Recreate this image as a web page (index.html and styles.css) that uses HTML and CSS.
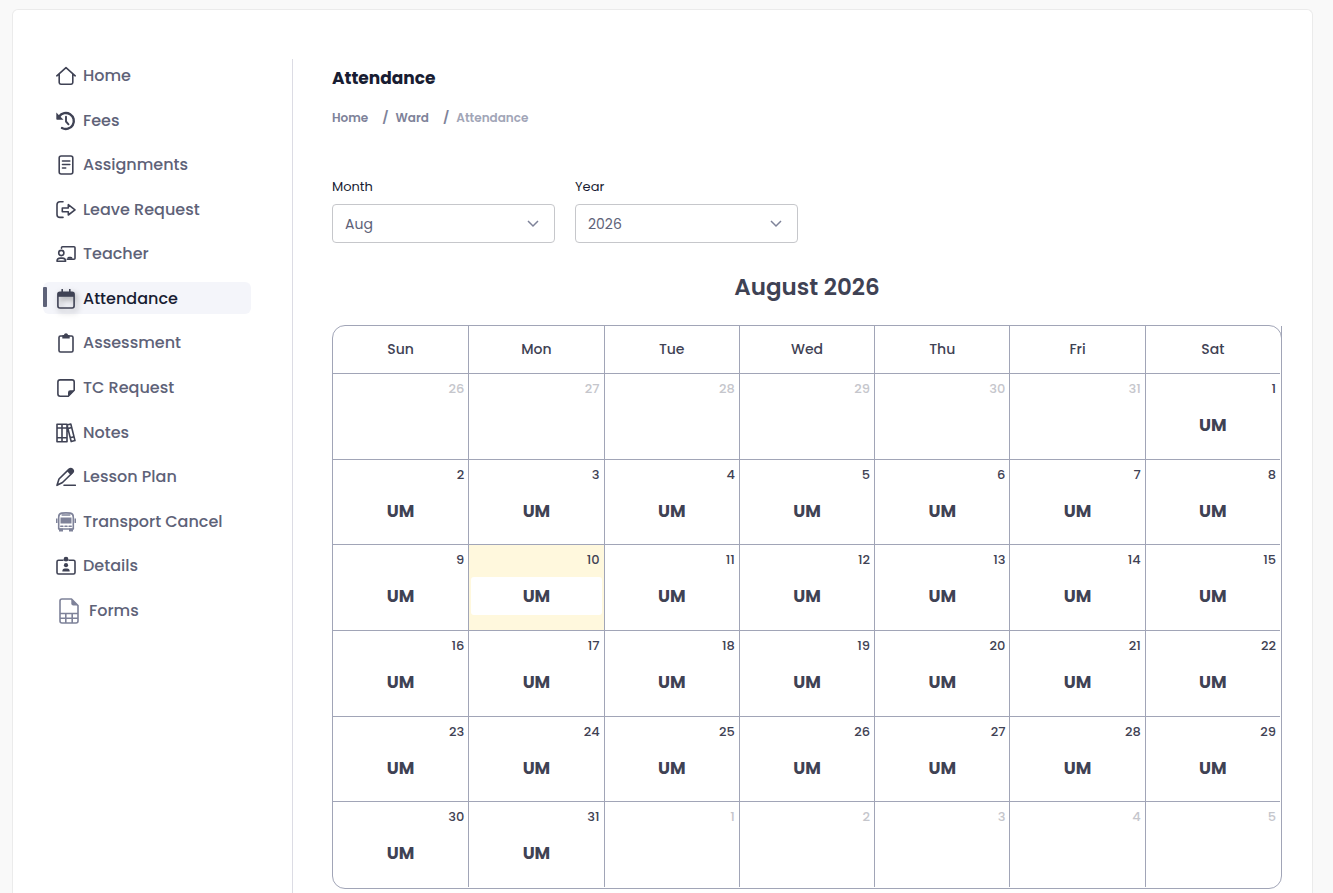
FILE: index.html
```html
<!DOCTYPE html>
<html lang="en">
<head>
<meta charset="utf-8">
<meta name="viewport" content="width=device-width, initial-scale=1">
<title>Attendance</title>
<link rel="stylesheet" href="styles.css">
</head>
<body>
<div class="card">
  <nav class="side" aria-label="Ward">
    <a class="item" href="#"><svg class="icon" viewBox="0 0 20 20"><path d="M.8 9.800 10 1.700l9.200 8.100M3.200 8v8.600q0 1.600 1.600 1.600h10.400q1.600 0 1.600-1.600V8"/></svg>Home</a>
    <a class="item" href="#"><svg class="icon" viewBox="0 0 20 20"><path stroke-width="2.400" d="M3.200 5.500A8 8 0 1 1 6 17"/><path class="solid" d="M.3 1.500v6.400q0 .8.8.8h6.400z"/><path d="M10 5.700v4.800l2.500 2.800" stroke-width="1.900"/></svg>Fees</a>
    <a class="item" href="#"><svg class="icon" viewBox="0 0 20 20"><rect x="3.200" y="1" width="13.600" height="18" rx="2"/><path d="M6.500 6h7.300M6.500 9.500h7.300M6.500 13h3.200"/></svg>Assignments</a>
    <a class="item" href="#"><svg class="icon" viewBox="0 0 20 20"><path d="M7 1.800H4Q1 1.800 1 4.800v9.600q0 3 3 3h3"/><path d="M6.300 8v3.800h6V15L19 9.900 12.300 4.700V8z"/></svg>Leave Request</a>
    <a class="item" href="#"><svg class="icon" viewBox="0 0 20 20"><circle cx="5.300" cy="9" r="2.600"/><path d="M1 17.300q0-3.200 3.500-3.200h1.800q3.300 0 3.300 3.200zM5.500 4.200V3.800q0-1 1-1h11.500q1 0 1 1v10.500q0 1-1 1h-6.700"/><path class="solid" d="M11.200 14.800q0-2 1.600-2h2.100q1.600 0 1.600 2z"/></svg>Teacher</a>
    <a class="item active" href="#" aria-current="page"><svg class="icon" viewBox="0 0 20 20"><rect x="1.900" y="3.200" width="16.200" height="15.800" rx="2"/><path class="solid" d="M2 3.500h16v4.300H2z"/><path stroke-width="1.600" d="M6.200.5v3M13.800.5v3"/></svg>Attendance</a>
    <a class="item" href="#"><svg class="icon" viewBox="0 0 20 20"><path d="M7 3H4.500Q3 3 3 4.500v13Q3 19 4.500 19h11q1.500 0 1.500-1.500v-13Q17 3 15.500 3H13"/><path class="solid" d="M6.300 5.500V2.700q0-.8.8-.8h.8Q8.300.2 10 .2t2.100 1.700h.8q.8 0 .8.800v2.800z"/></svg>Assessment</a>
    <a class="item" href="#"><svg class="icon" viewBox="0 0 20 20"><path d="M12.300 18.200H4.100q-2.200 0-2.200-2.200V4.100q0-2.200 2.200-2.200H16q2.200 0 2.200 2.200v8.200z"/><path class="solid" d="M12 18.500v-4q0-2.200 2.200-2.200h4z"/></svg>TC Request</a>
    <a class="item" href="#"><svg class="icon" viewBox="0 0 20 20"><path d="M1 1.200h5v17.600H1zM6 1.200h5v17.600H6zM1 5h10M1 14.800h10M11 2l3.800-1L19 17.600l-3.800 1zM12 5.500l3.800-1M14.200 14.700l3.800-1"/></svg>Notes</a>
    <a class="item" href="#"><svg class="icon" viewBox="0 0 20 20"><path d="M1 18.300 3 12 12.800 2.400q2-1.800 3.700-.1 1.700 1.800 0 3.500L6.500 15.500zM8 18.300h11.300"/><path class="solid" d="m11 4.200 2-2q2-1.600 3.700.1 1.700 1.800 0 3.700l-2 2z"/></svg>Lesson Plan</a>
    <a class="item" href="#"><svg class="icon soft" viewBox="0 0 20 20"><path d="M2.700 17V5q0-3.500 3-3.900 4.300-.5 8.600 0 3 .4 3 3.900v12zM6.200 3h7.600"/><path class="solid" d="M4.500 5.500h11v6h-11zM3 16.500h4v3H3zM13 16.500h4v3h-4zM0 6.500h1.500V11H0zM18.500 6.500H20V11h-1.500z"/><path d="M4.800 14.200h2.100M9 14.200h2M13.100 14.200h2.100"/></svg>Transport Cancel</a>
    <a class="item" href="#"><svg class="icon" viewBox="0 0 20 20"><path d="M7 4.300H2.500Q1 4.300 1 5.800v10.700Q1 18 2.500 18h15q1.500 0 1.500-1.500V5.800q0-1.500-1.500-1.500H13"/><circle class="solid" cx="10" cy="3.200" r="2.400"/><circle class="solid" cx="10" cy="9.200" r="2.100"/><path class="solid" d="M6.300 15.400q0-3 2.500-3h2.400q2.500 0 2.500 3z"/></svg>Details</a>
    <a class="item forms" href="#"><svg class="icon soft" viewBox="0 0 20 26"><path d="M12.500 1H3Q1 1 1 3v20q0 2 2 2h14q2 0 2-2V7.500zM1 15.500h18M1 20.200h18M6.800 15.500V25M13.200 15.500V25"/><path class="solid" d="M12.300 1v4.500q0 2 2 2H19z"/></svg>Forms</a>
  </nav>
  <main class="main">
    <h1 class="title">Attendance</h1>
    <ol class="crumbs">
      <li><a href="#">Home</a></li>
      <li><a href="#">Ward</a></li>
      <li aria-current="page">Attendance</li>
    </ol>
    <form class="filters">
      <div class="field">
        <label for="month">Month</label>
        <div class="pick"><select id="month"><option>Aug</option></select><svg viewBox="0 0 12 8"><path d="m1 1 5 5 5-5"/></svg></div>
      </div>
      <div class="field">
        <label for="year">Year</label>
        <div class="pick"><select id="year"><option>2026</option></select><svg viewBox="0 0 12 8"><path d="m1 1 5 5 5-5"/></svg></div>
      </div>
    </form>
    <h2 class="month">August 2026</h2>
    <div class="frame">
      <table class="calendar">
        <thead><tr><th>Sun</th><th>Mon</th><th>Tue</th><th>Wed</th><th>Thu</th><th>Fri</th><th>Sat</th></tr></thead>
        <tbody>
          <tr><td class="other"><div class="day">26</div></td><td class="other"><div class="day">27</div></td><td class="other"><div class="day">28</div></td><td class="other"><div class="day">29</div></td><td class="other"><div class="day">30</div></td><td class="other"><div class="day">31</div></td><td><div class="day">1</div><div class="mark">UM</div></td></tr>
          <tr><td><div class="day">2</div><div class="mark">UM</div></td><td><div class="day">3</div><div class="mark">UM</div></td><td><div class="day">4</div><div class="mark">UM</div></td><td><div class="day">5</div><div class="mark">UM</div></td><td><div class="day">6</div><div class="mark">UM</div></td><td><div class="day">7</div><div class="mark">UM</div></td><td><div class="day">8</div><div class="mark">UM</div></td></tr>
          <tr><td><div class="day">9</div><div class="mark">UM</div></td><td class="today"><div class="day">10</div><div class="mark">UM</div></td><td><div class="day">11</div><div class="mark">UM</div></td><td><div class="day">12</div><div class="mark">UM</div></td><td><div class="day">13</div><div class="mark">UM</div></td><td><div class="day">14</div><div class="mark">UM</div></td><td><div class="day">15</div><div class="mark">UM</div></td></tr>
          <tr><td><div class="day">16</div><div class="mark">UM</div></td><td><div class="day">17</div><div class="mark">UM</div></td><td><div class="day">18</div><div class="mark">UM</div></td><td><div class="day">19</div><div class="mark">UM</div></td><td><div class="day">20</div><div class="mark">UM</div></td><td><div class="day">21</div><div class="mark">UM</div></td><td><div class="day">22</div><div class="mark">UM</div></td></tr>
          <tr><td><div class="day">23</div><div class="mark">UM</div></td><td><div class="day">24</div><div class="mark">UM</div></td><td><div class="day">25</div><div class="mark">UM</div></td><td><div class="day">26</div><div class="mark">UM</div></td><td><div class="day">27</div><div class="mark">UM</div></td><td><div class="day">28</div><div class="mark">UM</div></td><td><div class="day">29</div><div class="mark">UM</div></td></tr>
          <tr><td><div class="day">30</div><div class="mark">UM</div></td><td><div class="day">31</div><div class="mark">UM</div></td><td class="other"><div class="day">1</div></td><td class="other"><div class="day">2</div></td><td class="other"><div class="day">3</div></td><td class="other"><div class="day">4</div></td><td class="other"><div class="day">5</div></td></tr>
        </tbody>
      </table>
    </div>
  </main>
</div>
</body>
</html>
```
FILE: styles.css
```css
* { box-sizing: border-box; }
body {
  margin: 0;
  min-height: 100vh;
  padding: 9px 20px 0 12px;
  display: flex;
  background: #f9f9f9;
  color: #3f4254;
  font-family: Poppins, Inter, sans-serif;
}
a { color: inherit; text-decoration: none; }
.card {
  flex: 1;
  display: flex;
  padding: 49px 30px 0;
  background: #fff;
  border: 1px solid #ebebeb;
  border-bottom: 0;
  border-radius: 6px 6px 0 0;
}
.side {
  flex: none;
  width: 208px;
  height: 567px;
  display: flex;
  flex-direction: column;
  justify-content: space-between;
}
.item {
  position: relative;
  display: flex;
  align-items: center;
  gap: 7px;
  height: 32px;
  padding: 2px 0 0 13px;
  border-radius: 6px;
  color: #5e6278;
  font-size: 16px;
  font-weight: 500;
  line-height: 24px;
}
.item.active { background: #f4f5fa; color: #181c32; }
.item.active::before {
  content: "";
  position: absolute;
  left: 0;
  top: 5px;
  width: 4px;
  height: 20px;
  border-radius: 1px;
  background: #5e6278;
}
.icon {
  flex: none;
  width: 20px;
  height: 20px;
  fill: none;
  stroke: #3f4254;
  stroke-width: 1.6;
  stroke-linejoin: round;
  stroke-linecap: round;
}
.icon .solid { fill: #3f4254; stroke: none; }
.active .icon { filter: drop-shadow(2px 3px 3px rgba(0, 0, 0, .35)); }
.icon.soft { stroke: #7e8299; }
.icon.soft .solid { fill: #7e8299; }
.forms { padding-left: 16px; gap: 10px; }
.forms .icon { height: 26px; }
.main {
  flex: 1;
  min-width: 0;
  margin-left: 41px;
  padding: 0 0 4px 39px;
  border-left: 1px solid #dcdce4;
}
.title {
  margin: 6px 0 0;
  color: #181c32;
  font-size: 17px;
  font-weight: 700;
  line-height: 26px;
}
.crumbs {
  display: flex;
  margin: 17px 0 0;
  padding: 0;
  list-style: none;
  color: #7e8299;
  font-size: 12px;
  font-weight: 600;
  line-height: 20px;
}
.crumbs li + li::before { content: "/"; padding: 0 7px 0 14px; font-size: 13px; line-height: 16px; }
.crumbs li:last-child { color: #a1a5b7; }
.crumbs li:last-child::before { color: #7e8299; }
.filters { display: flex; gap: 20px; margin-top: 49px; }
.field { width: 223px; }
.field label { display: block; margin-bottom: 7px; color: #181c32; font-size: 13px; line-height: 20px; }
.pick { position: relative; }
.pick select {
  display: block;
  appearance: none;
  width: 100%;
  height: 39px;
  padding: 0 40px 0 12px;
  border: 1px solid #c6c7cb;
  border-radius: 4px;
  background: #fff;
  color: #5e6278;
  font: 14px Poppins, Inter, sans-serif;
}
.pick svg {
  position: absolute;
  right: 16px;
  top: 16px;
  width: 12px;
  height: 8px;
  fill: none;
  stroke: #7e8299;
  stroke-width: 1.5;
  pointer-events: none;
}
.month { margin: 26px 0 20px; font-size: 23px; font-weight: 600; line-height: 36px; text-align: center; }
.frame {
  position: relative;
  padding: 0 1px 1px 0;
  border: 1px solid #a1a5b7;
  border-radius: 13px;
}
.frame::after {
  content: "";
  position: absolute;
  top: 0;
  right: -1px;
  width: 1px;
  height: 14px;
  background: #a1a5b7;
}
.calendar { width: 100%; height: 561px; table-layout: fixed; border-collapse: separate; border-spacing: 0; }
.calendar th {
  height: 48px;
  padding: 0;
  border-bottom: 1px solid #a1a5b7;
  font-size: 14px;
  font-weight: 500;
}
.calendar td { padding: 0; vertical-align: top; border-bottom: 1px solid #a1a5b7; }
.calendar tr > * + * { border-left: 1px solid #a1a5b7; }
.calendar tbody tr:last-child td { border-bottom: 0; }
.day { padding: 5px 4px 7px; font-size: 13px; font-weight: 500; line-height: 20px; text-align: right; }
.other .day { color: #c5c6cc; }
.today { background: #fff8dd; }
.mark {
  margin: 0 2px;
  border-radius: 3px;
  background: #fff;
  font-size: 17px;
  font-weight: 700;
  line-height: 38px;
  text-align: center;
}
```
